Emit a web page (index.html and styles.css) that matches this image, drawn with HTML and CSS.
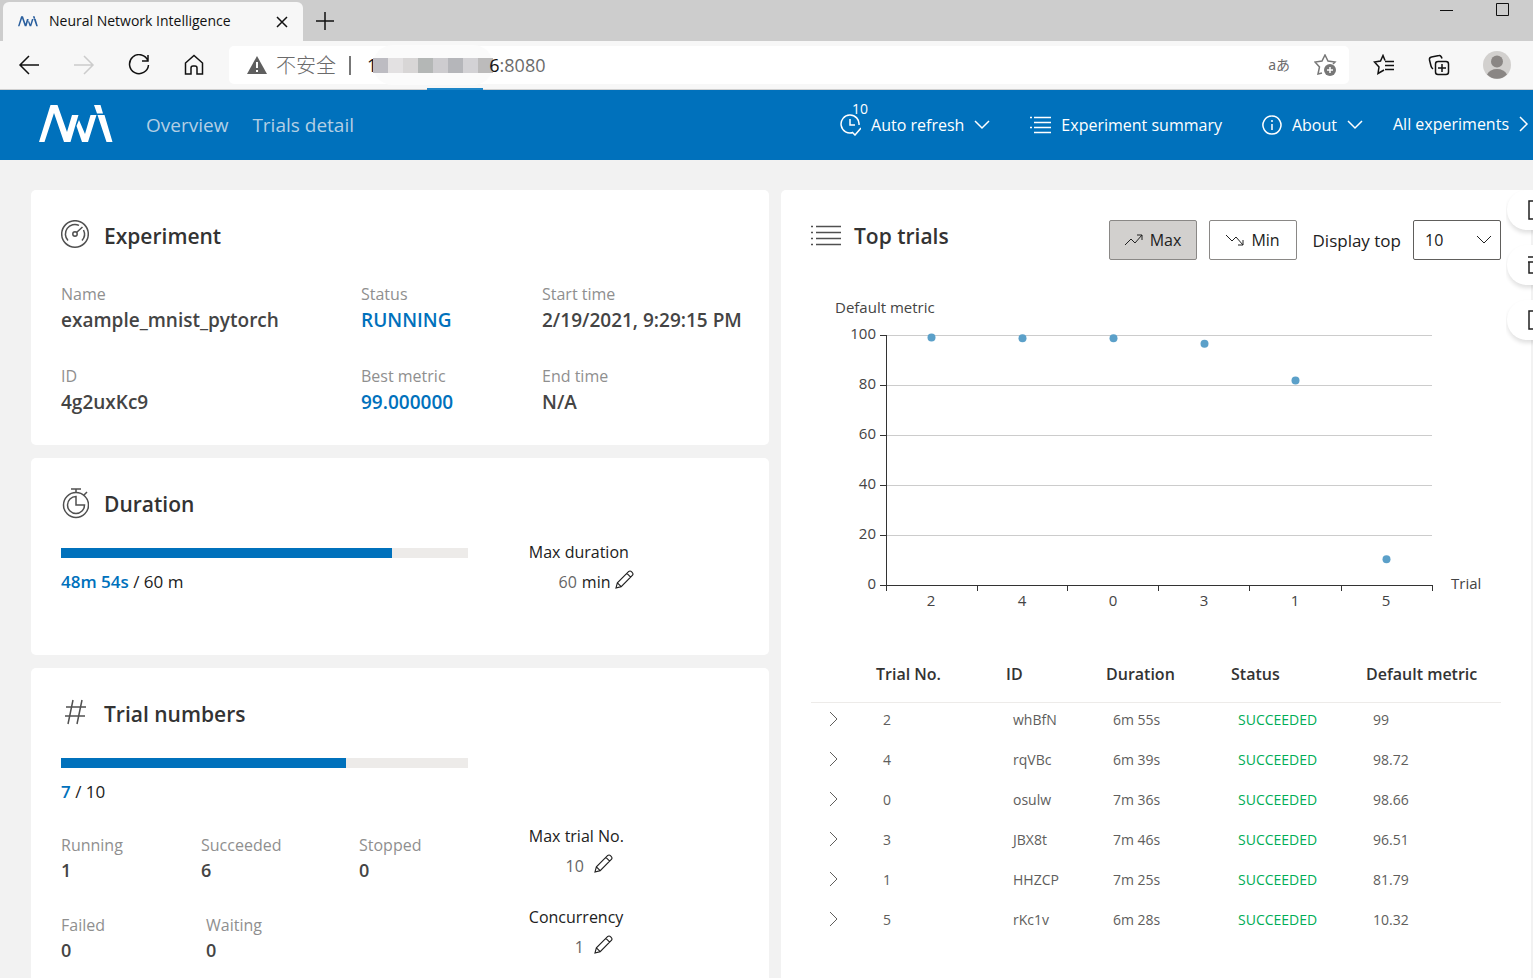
FILE: index.html
```html
<!DOCTYPE html>
<html lang="en">
<head>
    <meta charset="UTF-8">
    <meta name="viewport" content="width=device-width, initial-scale=1.0">
    <title>Neural Network Intelligence</title>
    <link rel="stylesheet" href="styles.css">
</head>
<body>

<svg class="defs" aria-hidden="true">
    <symbol id="logo" viewBox="0 0 74 38">
        <path d="M0 37 L11.500 0 H18.500 L28 27 L33 10 H39.500 L31.500 37 H25 L15 8 L5.500 37 Z M40 15 L46 29 L51.500 10 H57.500 L49 37 H43 L37.500 21 Z M55 0 H61.500 L64 8.500 H58 Z M58.500 10 H65.500 L73.500 37 H67.500 Z"/>
    </symbol>
    <symbol id="down" viewBox="0 0 16 10"><path d="M1 1 L8 8 L15 1"/></symbol>
    <symbol id="right" viewBox="0 0 10 16"><path d="M1 1 L8 8 L1 15"/></symbol>
    <symbol id="pencil" viewBox="0 0 20 20">
        <path d="M1 19 L2.500 13.500 L14.500 1.500 C16.500 0 20 3.500 18.500 5.500 L6.500 17.500 Z M2.500 13.500 L6.500 17.500 M12.500 3.500 L16.500 7.500"/>
    </symbol>
</svg>

<div class="browser">
    <div class="tabs">
        <div class="tab">
            <svg class="tab-logo"><use href="#logo"/></svg>
            <span class="tab-title">Neural Network Intelligence</span>
            <button class="plain" aria-label="Close tab"><svg width="12" height="12"><path d="M1 1 L11 11 M11 1 L1 11"/></svg></button>
        </div>
        <button class="plain new-tab" aria-label="New tab"><svg width="18" height="18"><path d="M9 0 V18 M0 9 H18"/></svg></button>
        <div class="window-buttons">
            <button class="plain" aria-label="Minimize"><svg width="14" height="14"><path d="M0 7.500 H13"/></svg></button>
            <button class="plain" aria-label="Maximize"><svg width="14" height="14"><path d="M.5 .5 H12.500 V12.500 H.5 Z"/></svg></button>
        </div>
    </div>
    <div class="toolbar">
        <div class="nav-buttons">
            <button class="plain" aria-label="Back"><svg width="22" height="22"><path d="M21 11 H2 M11 2 L2 11 L11 20"/></svg></button>
            <button class="plain disabled" aria-label="Forward"><svg width="22" height="22"><path d="M1 11 H20 M11 2 L20 11 L11 20"/></svg></button>
            <button class="plain" aria-label="Reload"><svg width="22" height="22"><path d="M20 7 A9.500 9.500 0 1 0 20.500 11 M20 1 V7 H14"/></svg></button>
            <button class="plain" aria-label="Home"><svg width="22" height="22"><path d="M2.500 9 L11 1.500 L19.500 9 V20 H14 V14 Q14 12 12 12 H10 Q8 12 8 14 V20 H2.500 Z"/></svg></button>
        </div>
        <div class="address">
            <svg width="20" height="18"><path class="warn" d="M10 0 L20 18 H0 Z"/><path class="warn-mark" d="M10 6 V12 M10 14 V16"/></svg>
            <span class="insecure">不安全</span>
            <span class="divider"></span>
            <span class="url"><b>1</b><svg class="mosaic" width="120" height="40">
                <rect class="smudge" width="120" height="40" rx="20"/>
                <rect x="0" y="13" width="15" height="15" fill="#bdbcc2"/>
                <rect x="15" y="13" width="15" height="15" fill="#e3e1e2"/>
                <rect x="30" y="13" width="15" height="15" fill="#d8d6d6"/>
                <rect x="45" y="13" width="15" height="15" fill="#b4b7b6"/>
                <rect x="60" y="13" width="15" height="15" fill="#cdcccf"/>
                <rect x="75" y="13" width="15" height="15" fill="#b5b6ba"/>
                <rect x="90" y="13" width="15" height="15" fill="#d3d2d5"/>
                <rect x="105" y="13" width="15" height="15" fill="#bcbbbb"/>
            </svg><b>6</b>:8080</span>
            <span class="translate">aあ</span>
            <button class="plain grey" aria-label="Add to favorites"><svg width="23" height="22"><path d="M8 19 L4 20 L5.500 13 L1 8 L8 7 L11 1 L14 7 L21 8 L19 10"/><circle class="dot" cx="16" cy="16" r="6"/><path class="dot-plus" d="M16 13 V19 M13 16 H19"/></svg></button>
        </div>
        <div class="side-buttons">
            <button class="plain" aria-label="Favorites"><svg width="22" height="22"><path d="M12 6.500 L10 1.500 L7.500 7 L1.500 8 L6 13 L5 19.500 L11 16 M12 7.500 H21 M12 11.500 H21 M12 15.500 H21"/></svg></button>
            <button class="plain" aria-label="Collections"><svg width="22" height="22"><path d="M9.500 7.500 H18 Q20.500 7.500 20.500 10 V18 Q20.500 20.500 18 20.500 H10 Q7.500 20.500 7.500 18 V10 Q7.500 7.500 10 7.500 M14 10 V18 M10 14 H18 M5 15 Q3.500 14 3 12 L1.500 6 Q1 3.500 3.500 3 L11 1.500 Q13 1 14 4.500"/></svg></button>
            <svg class="avatar" viewBox="0 0 28 28"><circle cx="14" cy="14" r="14" fill="#d2d0ce"/><circle cx="14" cy="10.500" r="6" fill="#8a8684"/><path d="M4 23.500 Q7 18 14 18 Q21 18 24 23.500 A14 14 0 0 1 4 23.500" fill="#8a8684"/></svg>
        </div>
    </div>
</div>

<header class="header">
    <span class="strip"></span>
    <svg class="logo"><use href="#logo"/></svg>
    <nav class="links">
        <a href="#overview">Overview</a>
        <a href="#detail">Trials detail</a>
    </nav>
    <div class="actions">
        <button class="action">
            <svg width="21" height="22"><path d="M13 18.500 A9 9 0 1 1 19 11 M10 5 V11 H15 M12 18 L15 21 L21 14"/></svg>
            <span class="badge">10</span>
            Auto refresh
            <svg class="chevron"><use href="#down"/></svg>
        </button>
        <button class="action">
            <svg width="21" height="18"><path d="M0 1.500 H2 M4 1.500 H21 M4 6.500 H21 M4 11.500 H21 M0 11.500 H2 M4 16.500 H21"/></svg>
            Experiment summary
        </button>
        <button class="action">
            <svg width="20" height="20"><path d="M10 1 A9 9 0 1 1 9.900 1 M10 5 V7 M10 9 V15"/></svg>
            About
            <svg class="chevron"><use href="#down"/></svg>
        </button>
        <a class="action all" href="#experiments">All experiments <svg class="next"><use href="#right"/></svg></a>
    </div>
</header>

<main class="content">
    <div class="column">
        <section class="card">
            <h2 class="title">
                <svg width="28" height="32"><g transform="translate(14 14)"><circle r="13.300"/><path d="M-7 6.500 A9.500 9.500 0 0 1 4 -8.600 M8.500 -4 A9.500 9.500 0 0 1 7 6.500 M1.500 -1.500 L7.500 -7"/><circle r="2.200"/></g></svg>
                Experiment
            </h2>
            <dl class="fields">
                <div><dt>Name</dt><dd>example_mnist_pytorch</dd></div>
                <div><dt>Status</dt><dd class="blue">RUNNING</dd></div>
                <div><dt>Start time</dt><dd>2/19/2021, 9:29:15 PM</dd></div>
                <div><dt>ID</dt><dd>4g2uxKc9</dd></div>
                <div><dt>Best metric</dt><dd class="blue">99.000000</dd></div>
                <div><dt>End time</dt><dd>N/A</dd></div>
            </dl>
        </section>

        <section class="card duration">
            <h2 class="title">
                <svg width="28" height="32"><circle cx="15" cy="17" r="12.500"/><path d="M15 8.500 A8.500 8.500 0 1 0 23.500 17 H15 Z M10 1 H20 M15 1 V4 M23 7 L26 4"/></svg>
                Duration
            </h2>
            <div class="split">
                <div class="progress">
                    <div class="bar"><div class="fill" style="width: 81.4%"></div></div>
                    <p><b>48m 54s</b> / 60 m</p>
                </div>
                <div class="limits">
                    <div class="limit">
                        <label for="max-duration">Max duration</label>
                        <div class="edit">
                            <input id="max-duration" value="60">
                            <span>min</span>
                            <button class="plain" aria-label="Edit max duration"><svg class="pencil"><use href="#pencil"/></svg></button>
                        </div>
                    </div>
                </div>
            </div>
        </section>

        <section class="card">
            <h2 class="title">
                <svg width="28" height="32"><path d="M12 2 L7 26 M21 2 L16 26 M5 9 H25 M4 18 H24"/></svg>
                Trial numbers
            </h2>
            <div class="split">
                <div class="progress">
                    <div class="bar"><div class="fill" style="width: 70%"></div></div>
                    <p><b>7</b> / 10</p>
                    <dl class="stats">
                        <div><dt>Running</dt><dd>1</dd></div>
                        <div><dt>Succeeded</dt><dd>6</dd></div>
                        <div><dt>Stopped</dt><dd>0</dd></div>
                    </dl>
                    <dl class="stats two">
                        <div><dt>Failed</dt><dd>0</dd></div>
                        <div><dt>Waiting</dt><dd>0</dd></div>
                    </dl>
                </div>
                <div class="limits low">
                    <div class="limit">
                        <label for="max-trials">Max trial No.</label>
                        <div class="edit">
                            <input class="wide" id="max-trials" value="10">
                            <button class="plain" aria-label="Edit max trial number"><svg class="pencil"><use href="#pencil"/></svg></button>
                        </div>
                    </div>
                    <div class="limit">
                        <label for="concurrency">Concurrency</label>
                        <div class="edit">
                            <input class="wide" id="concurrency" value="1">
                            <button class="plain" aria-label="Edit concurrency"><svg class="pencil"><use href="#pencil"/></svg></button>
                        </div>
                    </div>
                </div>
            </div>
        </section>
    </div>

    <section class="card trials">
        <div class="trials-head">
            <h2 class="title">
                <svg width="31" height="32"><path d="M0 6.500 H2 M5 6.500 H30 M0 12.500 H2 M5 12.500 H30 M0 18.500 H2 M5 18.500 H30 M0 24.500 H2 M5 24.500 H30"/></svg>
                Top trials
            </h2>
            <div class="controls">
                <button class="toggle on"><svg width="20" height="14"><path d="M1 12 L7 6 L11 10 L18 2 M13 2 H18 V7"/></svg>Max</button>
                <button class="toggle"><svg width="20" height="14"><path d="M1 2 L7 8 L11 4 L18 12 M13 12 H18 V7"/></svg>Min</button>
                <label for="top">Display top</label>
                <div class="select">
                    <select id="top"><option>10</option><option>20</option><option>30</option></select>
                    <svg class="chevron"><use href="#down"/></svg>
                </div>
            </div>
        </div>

        <svg class="chart" viewBox="0 0 690 330">
            <g class="grid">
                <path d="M76 45.500 H621 M76 95.500 H621 M76 145.500 H621 M76 195.500 H621 M76 245.500 H621"/>
            </g>
            <g class="axis">
                <path d="M75.500 45 V301 M69 45.500 H76 M69 95.500 H76 M69 145.500 H76 M69 195.500 H76 M69 245.500 H76 M69 295.500 H622"/>
                <path d="M166.500 296 V301 M256.500 296 V301 M347.500 296 V301 M438.500 296 V301 M530.500 296 V301 M621.500 296 V301"/>
            </g>
            <text x="24" y="23">Default metric</text>
            <g class="y-labels">
                <text x="65" y="49">100</text>
                <text x="65" y="99">80</text>
                <text x="65" y="149">60</text>
                <text x="65" y="199">40</text>
                <text x="65" y="249">20</text>
                <text x="65" y="299">0</text>
            </g>
            <g class="x-labels">
                <text x="120" y="316">2</text>
                <text x="211" y="316">4</text>
                <text x="302" y="316">0</text>
                <text x="393" y="316">3</text>
                <text x="484" y="316">1</text>
                <text x="575" y="316">5</text>
            </g>
            <text x="640" y="299">Trial</text>
            <g class="points">
                <circle cx="120.500" cy="47.500" r="4"/>
                <circle cx="211.500" cy="48.300" r="4"/>
                <circle cx="302.500" cy="48.300" r="4"/>
                <circle cx="393.500" cy="53.700" r="4"/>
                <circle cx="484.500" cy="90.500" r="4"/>
                <circle cx="575.500" cy="269.200" r="4"/>
            </g>
        </svg>

        <table class="table">
            <colgroup><col class="c-open"><col class="c-no"><col class="c-id"><col class="c-time"><col class="c-status"><col></colgroup>
            <thead>
                <tr><th></th><th>Trial No.</th><th>ID</th><th>Duration</th><th>Status</th><th>Default metric</th></tr>
            </thead>
            <tbody>
                <tr><td><button class="plain" aria-label="Expand trial 2"><svg class="next"><use href="#right"/></svg></button></td><td>2</td><td>whBfN</td><td>6m 55s</td><td class="ok">SUCCEEDED</td><td>99</td></tr>
                <tr><td><button class="plain" aria-label="Expand trial 4"><svg class="next"><use href="#right"/></svg></button></td><td>4</td><td>rqVBc</td><td>6m 39s</td><td class="ok">SUCCEEDED</td><td>98.72</td></tr>
                <tr><td><button class="plain" aria-label="Expand trial 0"><svg class="next"><use href="#right"/></svg></button></td><td>0</td><td>osulw</td><td>7m 36s</td><td class="ok">SUCCEEDED</td><td>98.66</td></tr>
                <tr><td><button class="plain" aria-label="Expand trial 3"><svg class="next"><use href="#right"/></svg></button></td><td>3</td><td>JBX8t</td><td>7m 46s</td><td class="ok">SUCCEEDED</td><td>96.51</td></tr>
                <tr><td><button class="plain" aria-label="Expand trial 1"><svg class="next"><use href="#right"/></svg></button></td><td>1</td><td>HHZCP</td><td>7m 25s</td><td class="ok">SUCCEEDED</td><td>81.79</td></tr>
                <tr><td><button class="plain" aria-label="Expand trial 5"><svg class="next"><use href="#right"/></svg></button></td><td>5</td><td>rKc1v</td><td>6m 28s</td><td class="ok">SUCCEEDED</td><td>10.32</td></tr>
            </tbody>
        </table>
    </section>

    <div class="floating">
        <button aria-label="Search space"><svg width="20" height="20"><path d="M1 1 H19 V19 H1 Z"/></svg></button>
        <button aria-label="Config"><svg width="22" height="20"><path d="M-1 2 H20 V7 H-1 Z M1 7 V18 H18 V7"/></svg></button>
        <button aria-label="Log files"><svg width="20" height="20"><path d="M1 1 H19 V19 H1 Z"/></svg></button>
    </div>
</main>

</body>
</html>
```

FILE: styles.css
```css
* {
    padding: 0;
    margin: 0;
    box-sizing: border-box;
}
body {
    height: 100vh;
    overflow: hidden;
    background: #f2f2f2;
    color: #212121;
    font-family: "Open Sans", "Noto Sans", "Noto Sans CJK SC", sans-serif;
    font-size: 16px;
}
svg {
    flex: none;
    fill: none;
    stroke: currentColor;
    stroke-width: 1.5;
}
button, input, select {
    font: inherit;
    color: inherit;
}
a {
    color: inherit;
    text-decoration: none;
}
b {
    font-weight: 600;
}
.defs {
    display: none;
}
.plain {
    display: flex;
    border: none;
    background: none;
    cursor: pointer;
}

/* browser bar */
.browser {
    color: #111;
}
.tabs {
    display: flex;
    align-items: center;
    height: 41px;
    padding-left: 3px;
    background: #cdcdcd;
}
.tab {
    display: flex;
    align-items: center;
    align-self: flex-end;
    width: 300px;
    height: 39px;
    padding: 0 15px;
    background: #f7f7f7;
    border-radius: 6px 6px 0 0;
}
.tab-logo {
    width: 20px;
    height: 11px;
    margin-right: 11px;
    fill: #2a5f9e;
    stroke: none;
}
.tab-title {
    flex: 1;
    padding-bottom: 2px;
    font-size: 14px;
}
.new-tab {
    margin-left: 13px;
}
.window-buttons {
    display: flex;
    gap: 42px;
    height: 36px;
    margin-left: auto;
    padding-right: 23px;
}
.window-buttons svg {
    stroke-width: 1;
}
.window-buttons {
    align-self: flex-start;
    padding-top: 3px;
}
.toolbar {
    display: flex;
    align-items: center;
    height: 49px;
    background: #f7f7f7;
    border-bottom: 1px solid #d0d0d0;
}
.nav-buttons {
    display: flex;
    gap: 33px;
    padding: 0 24px 0 18px;
}
.disabled {
    color: #ccc;
}
.address {
    display: flex;
    align-items: center;
    flex: 1;
    height: 38px;
    padding: 0 12px 0 18px;
    background: #fff;
    border-radius: 5px;
    color: #6b6b6b;
    font-size: 18px;
}
.warn {
    fill: #5f5f5f;
    stroke: none;
}
.warn-mark {
    stroke: #fff;
    stroke-width: 2;
}
.insecure {
    margin: 0 13px 0 9px;
    padding-bottom: 2px;
    font-family: "Noto Sans CJK SC", sans-serif;
    font-size: 20px;
    font-weight: 300;
}
.divider {
    width: 2px;
    height: 19px;
    margin-right: 16px;
    background: #777;
}
.url {
    display: flex;
    align-items: center;
    flex: 1;
}
.url b {
    color: #111;
    font-weight: 400;
}
.mosaic {
    margin: 0 -4px;
    stroke: none;
}
.smudge {
    fill: #fbfbfb;
}
.translate {
    margin-right: 24px;
    padding-bottom: 2px;
    font-family: "Noto Sans", "Noto Sans CJK JP", sans-serif;
    font-size: 14px;
}
.grey {
    color: #777;
}
.dot {
    fill: #777;
    stroke: none;
}
.dot-plus {
    stroke: #fff;
}
.side-buttons {
    display: flex;
    align-items: center;
    gap: 33px;
    padding: 0 22px 0 24px;
}
.avatar {
    width: 28px;
    height: 28px;
    stroke: none;
}

/* app header */
.header {
    position: relative;
    display: flex;
    align-items: center;
    height: 70px;
    padding: 0 4px 0 39px;
    background: #0071bc;
    color: #fff;
}
.strip {
    position: absolute;
    left: 427px;
    top: -2px;
    width: 56px;
    height: 2px;
    background: #1e86c8;
}
.logo {
    width: 74px;
    height: 38px;
    margin-bottom: 2px;
    fill: #fff;
    stroke: none;
}
.links {
    display: flex;
    gap: 24px;
    margin-left: 33px;
    color: #b3cfe4;
    font-size: 19px;
}
.actions {
    display: flex;
    align-items: center;
    gap: 40px;
    margin-left: auto;
}
.action {
    position: relative;
    display: flex;
    align-items: center;
    gap: 10px;
    border: none;
    background: none;
    white-space: nowrap;
}
.all {
    margin-left: -10px;
    padding-bottom: 2px;
}
.badge {
    position: absolute;
    left: 12px;
    top: -15px;
    font-size: 14px;
}
.chevron {
    width: 16px;
    height: 10px;
}
.next {
    width: 10px;
    height: 16px;
}

/* cards */
.content {
    position: relative;
    display: grid;
    grid-template-columns: 738fr 750fr;
    gap: 12px;
    padding: 30px 2px 0 31px;
}
.column {
    display: flex;
    flex-direction: column;
    gap: 13px;
}
.card {
    padding: 30px;
    background: #fff;
    border-radius: 5px;
}
.duration {
    padding-bottom: 58px;
}
.title {
    display: flex;
    align-items: center;
    gap: 15px;
    height: 32px;
    color: #333;
    font-size: 21px;
    font-weight: 600;
}
.title svg {
    color: #505050;
}
.fields {
    display: grid;
    grid-template-columns: 300fr 181fr 197fr;
    row-gap: 30px;
    margin-top: 29px;
    line-height: 26px;
    white-space: nowrap;
}
.fields div {
    min-width: 0;
}
dt {
    color: #8f8f8f;
}
dd {
    color: #444;
    font-size: 18px;
    font-weight: 600;
}
.fields dd {
    font-size: 19px;
}
.blue, .progress b {
    color: #0071bc;
}
.split {
    display: flex;
    gap: 9%;
    margin-top: 17px;
    line-height: 30px;
}
.progress {
    width: 60%;
}
.progress p {
    font-size: 17px;
}
.bar {
    height: 10px;
    margin: 11px 0 9px;
    background: #edebe9;
}
.fill {
    height: 100%;
    background: #0071bc;
}
.stats {
    display: grid;
    grid-template-columns: 140px 158px auto;
    margin-top: 26px;
    line-height: 25px;
}
.stats.two {
    grid-template-columns: 145px auto;
    margin-top: 30px;
}
.low {
    display: flex;
    flex-direction: column;
    gap: 21px;
    margin-top: 74px;
}
.edit {
    display: flex;
    align-items: center;
    gap: 5px;
    height: 30px;
}
.edit input {
    width: 48px;
    border: none;
    background: none;
    color: #666;
    text-align: right;
}
.edit .wide {
    width: 55px;
    margin-right: 5px;
}
.edit button {
    padding-bottom: 5px;
}
.pencil {
    width: 19px;
    height: 19px;
    stroke-width: 1.2;
}

/* top trials */
.trials-head {
    display: flex;
    justify-content: space-between;
    height: 40px;
}
.trials-head .title {
    gap: 12px;
}
.controls {
    display: flex;
    align-items: center;
    gap: 12px;
}
.toggle {
    display: flex;
    align-items: center;
    justify-content: center;
    gap: 6px;
    width: 88px;
    height: 40px;
    border: 1px solid #8a8886;
    border-radius: 2px;
    background: #fff;
}
.toggle svg {
    stroke-width: 1;
}
.toggle.on {
    background: #d2d0ce;
}
.controls label {
    margin-left: 4px;
    font-size: 17px;
}
.select {
    position: relative;
}
.select select {
    width: 88px;
    height: 40px;
    padding-left: 11px;
    border: 1px solid #605e5c;
    border-radius: 2px;
    background: #fff;
    appearance: none;
}
.select .chevron {
    position: absolute;
    right: 9px;
    top: 15px;
    stroke-width: 1;
    pointer-events: none;
}
.chart {
    display: block;
    width: 100%;
    margin-top: 30px;
}
.chart text {
    fill: #444;
    stroke: none;
    font-size: 15px;
}
.grid {
    stroke: #ccc;
    stroke-width: 1;
}
.axis {
    stroke: #333;
    stroke-width: 1;
}
.y-labels {
    text-anchor: end;
}
.x-labels {
    text-anchor: middle;
}
.points {
    fill: #5ba0c9;
    stroke: none;
}
.table {
    width: 100%;
    margin-top: 27px;
    table-layout: fixed;
    border-collapse: collapse;
    text-align: left;
}
.c-open {
    width: 65px;
}
.c-no {
    width: 130px;
}
.c-id {
    width: 100px;
}
.c-time {
    width: 125px;
}
.c-status {
    width: 135px;
}
.table th {
    height: 55px;
    border-bottom: 1px solid #edebe9;
    color: #333;
    font-size: 16px;
    font-weight: 600;
}
.table td {
    height: 40px;
    padding: 0 0 5px 7px;
    color: #605e5c;
    font-size: 14px;
}
.table td:first-child {
    padding: 0 0 7px 18px;
}
.table .next {
    stroke-width: 1;
}
.table .ok {
    color: #00ad56;
}

/* side buttons, half off the page */
.floating {
    position: absolute;
    top: 30px;
    right: 0;
    width: 27px;
    overflow: hidden;
    padding: 0 0 8px 1px;
}
.floating button {
    display: flex;
    align-items: center;
    width: 60px;
    height: 40px;
    margin-bottom: 15px;
    padding-left: 21px;
    border: none;
    border-radius: 20px;
    background: #fff;
    box-shadow: 0 3px 4px rgba(0, 0, 0, 0.12);
}
```
